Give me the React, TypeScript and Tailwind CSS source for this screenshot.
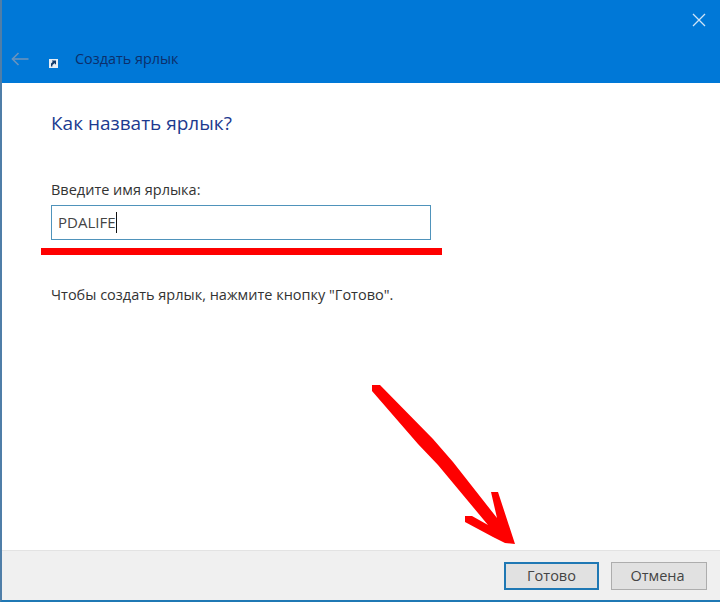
const UI_FONT = "font-['Open_Sans','Noto_Sans',sans-serif]";

function BackArrow() {
  return (
    <svg width="18" height="14" viewBox="0 0 18 14" fill="none" stroke="#6a93bd" strokeWidth="1.6">
      <path d="M1.5 7H17.5" />
      <path d="M7.5 1L1.5 7L7.5 13" />
    </svg>
  );
}

function ShortcutIcon() {
  return (
    <svg width="9" height="9" viewBox="0 0 9 9">
      <rect width="9" height="9" fill="#e6edf4" />
      <path d="M2 7.5V4.5L4.2 2.6H3V1.5H7V5.3H5.9V3.9L3.4 6V7.5Z" fill="#123a6b" />
    </svg>
  );
}

// Red marker annotations drawn on top of the screenshot
function RedArrow() {
  return (
    <svg className="absolute left-0 top-0" width="720" height="602" fill="#fe0000">
      <path d="M372 391V385H380L433 439L453 462L497 518L491 492H498L515 544L505 543L493 537L465 522V516H472L488 525L438 465L418 444Z" />
    </svg>
  );
}

export default function App() {
  return (
    <div className={`relative flex h-[602px] w-[720px] flex-col border-b-2 border-l-2 border-b-[#1f78b4] border-l-[#4f7ea8] bg-white ${UI_FONT}`}>
      {/* Header */}
      <div className="h-[83px] shrink-0 bg-[#0078d7]">
        <div className="flex justify-end pr-[14px] pt-[13px]">
          <svg width="14" height="14" viewBox="0 0 14 14" stroke="#cfe4f7" strokeWidth="1.3">
            <path d="M1 1L13 13M13 1L1 13" />
          </svg>
        </div>
        <div className="flex items-center pl-[9px] pt-[22px]">
          <BackArrow />
          <div className="ml-[20px] mt-[9px]">
            <ShortcutIcon />
          </div>
          <span className="ml-[17px] text-[14.4px] leading-5 text-[#0c2f6b]">Создать ярлык</span>
        </div>
      </div>

      {/* Content */}
      <div className="flex flex-1 flex-col pl-[49px]">
        <h1 className="mt-[26px] text-[19px] leading-7 text-[#1c3a8f]">Как назвать ярлык?</h1>
        <label className="mt-[43px] text-[14.5px] leading-5 text-[#333]">Введите имя ярлыка:</label>
        <div className="mt-[5px] flex h-[35px] w-[380px] items-center border-[1.5px] border-[#4f93bb] pl-[6px] text-[15px] text-[#444]">
          PDALIFE
          <span className="h-[21px] w-px bg-[#111]" />
        </div>
        <p className="mt-[45px] text-[14.5px] leading-5 text-[#333]">
          Чтобы создать ярлык, нажмите кнопку "Готово".
        </p>
      </div>

      {/* Footer */}
      <div className="flex h-[50px] shrink-0 items-start justify-end gap-[12px] border-t border-[#e3e3e3] bg-[#f0f0f0] pr-[13px] pt-[11px]">
        <button type="button" className="h-[28px] w-[95px] border-2 border-[#1f78b4] bg-[#e1e1e1] text-[14.5px] text-[#444]">
          Готово
        </button>
        <button type="button" className="h-[28px] w-[96px] border border-[#adadad] bg-[#e1e1e1] pr-[3px] text-[14.5px] text-[#444]">
          Отмена
        </button>
      </div>

      {/* Annotations */}
      <div className="absolute left-[39px] top-[248px] h-[7px] w-[401px] bg-[#fe0000]" />
      <div className="absolute -left-[2px] top-0">
        <RedArrow />
      </div>
    </div>
  );
}
